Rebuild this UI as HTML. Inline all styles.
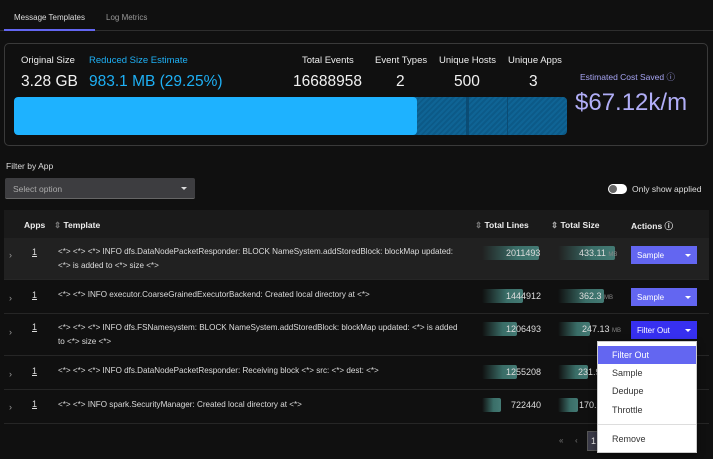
<!DOCTYPE html>
<html><head><style>
*{box-sizing:border-box;margin:0;padding:0}
body{width:713px;height:459px;background:#101010;font-family:"Liberation Sans",sans-serif;color:#e8e8e8;position:relative;overflow:hidden}
.a{position:absolute;white-space:nowrap}
.lbl{font-size:9.5px;color:#eee}
.val{font-size:15.5px;color:#f2f2f2}
.hdr{font-size:8.5px;font-weight:bold;color:#eee}
.row{position:absolute;left:4px;width:705px;border-bottom:1px solid #262626}
.tpl{font-size:8.1px;color:#ddd;line-height:14px}
.chev{font-size:9px;color:#999}
.one{font-size:9px;color:#ddd;text-decoration:underline}
.bar{position:absolute;height:14px;border-radius:2px;background:linear-gradient(90deg,rgba(58,110,104,0) 0%,#3a6e68 60%,#447a74 100%)}
.num{font-size:9px;color:#ddd}
.btn{position:absolute;left:631px;width:66px;height:18px;background:#6366f1;font-size:8px;color:#fff;padding:5px 0 0 6px}
.btn:after{content:"";position:absolute;right:6px;top:8px;border:3px solid transparent;border-top:3px solid #fff}
.mb{font-size:6px;color:#888}
</style></head><body>
<div class="a" style="left:14px;top:13px;font-size:8px;color:#ddd">Message Templates</div>
<div class="a" style="left:106px;top:13px;font-size:8px;color:#999">Log Metrics</div>
<div class="a" style="left:0;top:30px;width:713px;height:1px;background:#2e2e2e"></div>
<div class="a" style="left:4px;top:29px;width:91px;height:2px;background:#6366f1"></div>

<div class="a" style="left:4px;top:43px;width:704px;height:103px;border:1px solid #3a3a3a;border-radius:5px"></div>
<div class="a lbl" style="left:21px;top:55px">Original Size</div>
<div class="a lbl" style="left:89px;top:55px;color:#1eb0f5">Reduced Size Estimate</div>
<div class="a lbl" style="left:302px;top:55px">Total Events</div>
<div class="a lbl" style="left:375px;top:55px">Event Types</div>
<div class="a lbl" style="left:439px;top:55px">Unique Hosts</div>
<div class="a lbl" style="left:508px;top:55px">Unique Apps</div>
<div class="a val" style="left:21px;top:73px">3.28 GB</div>
<div class="a val" style="left:89px;top:73px;color:#1eb0f5">983.1 MB (29.25%)</div>
<div class="a val" style="left:293px;top:73px">16688958</div>
<div class="a val" style="left:396px;top:73px">2</div>
<div class="a val" style="left:454px;top:73px">500</div>
<div class="a val" style="left:529px;top:73px">3</div>
<div class="a" style="left:14px;top:97px;width:553px;height:38px;border-radius:4px;background:repeating-linear-gradient(135deg,#0f6495 0 2px,#0c5a88 2px 4px);overflow:hidden">
 <div class="a" style="left:0;top:0;width:403px;height:38px;background:#1eb2ff;border-radius:4px"></div>
 <div class="a" style="left:452px;top:0;width:3px;height:38px;background:#0b4c74"></div>
 <div class="a" style="left:493px;top:0;width:1px;height:38px;background:#0b4c74"></div>
</div>
<div class="a" style="left:580px;top:71px;font-size:8.5px;color:#a6a4f2">Estimated Cost Saved &#9432;</div>
<div class="a" style="left:575px;top:89px;font-size:24px;color:#b1aef7">$67.12k/m</div>

<div class="a" style="left:6px;top:161px;font-size:8.5px;color:#ddd">Filter by App</div>
<div class="a" style="left:5px;top:178px;width:190px;height:21px;background:#3d3d40;border-radius:2px;border-bottom:1px solid #666"></div>
<div class="a" style="left:13px;top:184px;font-size:8.5px;color:#aaa">Select option</div>
<div class="a" style="left:181px;top:187px;border:3px solid transparent;border-top:3px solid #ddd"></div>
<div class="a" style="left:608px;top:184px;width:19px;height:10px;border-radius:5px;background:#fff"></div>
<div class="a" style="left:609px;top:185px;width:8px;height:8px;border-radius:4px;background:#666"></div>
<div class="a" style="left:632px;top:184px;font-size:8.5px;color:#ddd">Only show applied</div>

<div class="a" style="left:4px;top:210px;width:705px;height:28px;background:#1a1a1a"></div>
<div class="a hdr" style="left:24px;top:220px">Apps</div>
<div class="a hdr" style="left:54px;top:220px"><span style="color:#777">&#8661;</span> Template</div>
<div class="a hdr" style="left:475px;top:220px"><span style="color:#777">&#8661;</span> Total Lines</div>
<div class="a hdr" style="left:551px;top:220px"><span style="color:#aaa">&#8661;</span> Total Size</div>
<div class="a hdr" style="left:631px;top:220px">Actions &#9432;</div>

<div class="row" style="top:238px;height:42px;background:#212121"></div>
<div class="row" style="top:280px;height:34px"></div>
<div class="row" style="top:314px;height:42px"></div>
<div class="row" style="top:356px;height:34px"></div>
<div class="row" style="top:390px;height:34px"></div>

<div class="a chev" style="left:9px;top:250px">›</div><div class="a one" style="left:32px;top:247px">1</div>
<div class="a tpl" style="left:58px;top:245px">&lt;*&gt; &lt;*&gt; &lt;*&gt; INFO dfs.DataNodePacketResponder: BLOCK NameSystem.addStoredBlock: blockMap updated:<br>&lt;*&gt; is added to &lt;*&gt; size &lt;*&gt;</div>
<div class="bar" style="left:482px;top:246px;width:57px"></div><div class="a num" style="left:506px;top:248px">2011493</div>
<div class="bar" style="left:558px;top:246px;width:57px"></div><div class="a num" style="left:579px;top:248px">433.11 <span class="mb">MB</span></div>
<div class="btn" style="top:246px">Sample</div>

<div class="a chev" style="left:9px;top:293px">›</div><div class="a one" style="left:32px;top:290px">1</div>
<div class="a tpl" style="left:58px;top:288px">&lt;*&gt; &lt;*&gt; INFO executor.CoarseGrainedExecutorBackend: Created local directory at &lt;*&gt;</div>
<div class="bar" style="left:482px;top:289px;width:41px"></div><div class="a num" style="left:506px;top:291px">1444912</div>
<div class="bar" style="left:558px;top:289px;width:46px"></div><div class="a num" style="left:579px;top:291px">362.3 <span class="mb">MB</span></div>
<div class="btn" style="top:288px">Sample</div>

<div class="a chev" style="left:9px;top:327px">›</div><div class="a one" style="left:32px;top:322px">1</div>
<div class="a tpl" style="left:58px;top:321px">&lt;*&gt; &lt;*&gt; &lt;*&gt; INFO dfs.FSNamesystem: BLOCK NameSystem.addStoredBlock: blockMap updated: &lt;*&gt; is added<br>to &lt;*&gt; size &lt;*&gt;</div>
<div class="bar" style="left:482px;top:322px;width:35px"></div><div class="a num" style="left:506px;top:324px">1206493</div>
<div class="bar" style="left:558px;top:322px;width:32px"></div><div class="a num" style="left:582px;top:324px">247.13 <span class="mb">MB</span></div>
<div class="btn" style="top:321px;background:#3730f0">Filter Out</div>

<div class="a chev" style="left:9px;top:369px">›</div><div class="a one" style="left:32px;top:366px">1</div>
<div class="a tpl" style="left:58px;top:364px">&lt;*&gt; &lt;*&gt; &lt;*&gt; INFO dfs.DataNodePacketResponder: Receiving block &lt;*&gt; src: &lt;*&gt; dest: &lt;*&gt;</div>
<div class="bar" style="left:482px;top:365px;width:35px"></div><div class="a num" style="left:506px;top:367px">1255208</div>
<div class="bar" style="left:558px;top:365px;width:30px"></div><div class="a num" style="left:578px;top:367px">231.9</div>

<div class="a chev" style="left:9px;top:402px">›</div><div class="a one" style="left:32px;top:399px">1</div>
<div class="a tpl" style="left:58px;top:398px">&lt;*&gt; &lt;*&gt; INFO spark.SecurityManager: Created local directory at &lt;*&gt;</div>
<div class="bar" style="left:482px;top:398px;width:19px"></div><div class="a num" style="left:511px;top:400px">722440</div>
<div class="bar" style="left:558px;top:398px;width:20px"></div><div class="a num" style="left:579px;top:400px">170.1</div>

<div class="a" style="left:559px;top:436px;font-size:8px;color:#777">«</div>
<div class="a" style="left:575px;top:436px;font-size:8px;color:#777">‹</div>
<div class="a" style="left:587px;top:431px;width:14px;height:20px;background:#3a3a48;border:1px solid #555;font-size:9px;padding:4px 0 0 3px">1</div>

<div class="a" style="left:597px;top:341px;width:100px;height:112px;background:#fff;border:1px solid #ccc;box-shadow:0 2px 6px rgba(0,0,0,.5)"></div>
<div class="a" style="left:598px;top:346px;width:98px;height:18px;background:#6366f1"></div>
<div class="a" style="left:612px;top:350px;font-size:9px;color:#fff">Filter Out</div>
<div class="a" style="left:612px;top:368px;font-size:9px;color:#333">Sample</div>
<div class="a" style="left:612px;top:386px;font-size:9px;color:#333">Dedupe</div>
<div class="a" style="left:612px;top:405px;font-size:9px;color:#333">Throttle</div>
<div class="a" style="left:598px;top:424px;width:98px;height:1px;background:#ddd"></div>
<div class="a" style="left:612px;top:434px;font-size:9px;color:#333">Remove</div>
</body></html>
